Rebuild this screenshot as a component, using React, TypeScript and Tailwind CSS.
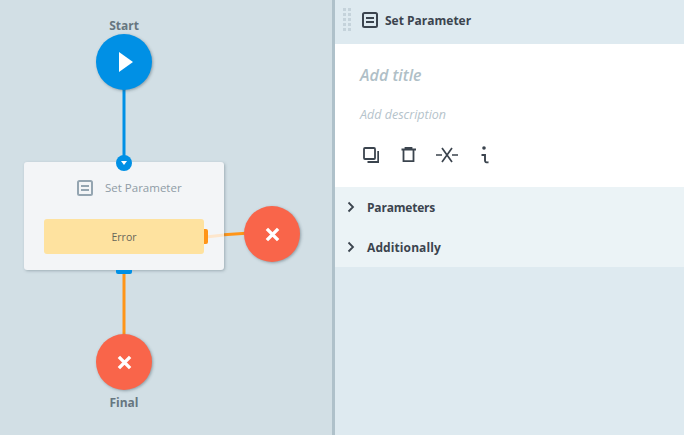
const font = { fontFamily: '"Open Sans", "Noto Sans", sans-serif' };

function SetIcon({ className }: { className: string }) {
  return (
    <svg viewBox="0 0 16 16" className={className} fill="none" stroke="currentColor" strokeWidth="2">
      <rect x="1" y="1" width="14" height="14" rx="1.5" />
      <path d="M4 6h8M4 10h8" />
    </svg>
  );
}

function Cross({ className }: { className: string }) {
  return (
    <svg viewBox="0 0 16 16" className={className} fill="none" stroke="#fff" strokeWidth="3.6">
      <path d="M2 2l12 12M14 2L2 14" />
    </svg>
  );
}

function Chevron() {
  return (
    <svg viewBox="0 0 8 12" className="w-2 h-3 text-[#3b444e]" fill="none" stroke="currentColor" strokeWidth="1.8">
      <path d="M1.500 1.500L6 6l-4.500 4.500" />
    </svg>
  );
}

function Canvas() {
  return (
    <div className="relative w-[332px] shrink-0 bg-[#d2dfe5]">
      <svg className="absolute left-0 top-0" width="332" height="435" fill="none">
        <path d="M124 88V156" stroke="#0090e5" strokeWidth="3" />
        <path d="M124 272V336" stroke="#ff9518" strokeWidth="3" />
        <path d="M224 234.800L246 233.300" stroke="#ff9518" strokeWidth="3" />
      </svg>

      <div className="absolute left-[96px] top-[18px] w-14 text-center text-[12px] leading-4 font-bold text-[#66767f]">Start</div>
      <div className="absolute left-[96px] top-[34px] w-14 h-14 rounded-full bg-[#0090e5] shadow-[1px_1px_3px_rgba(60,80,90,0.45)] flex items-center justify-center">
        <svg viewBox="0 0 14 20" className="w-[14px] h-5 ml-1" fill="#fff"><path d="M0 0l14 10L0 20z" /></svg>
      </div>

      <div className="absolute left-6 top-[162px] w-[200px] h-[108px] rounded-[3px] bg-[#f3f5f7] shadow-[1px_1px_3px_rgba(60,80,90,0.35)]">
        <div className="flex items-center h-[52px] pl-[53px] gap-3">
          <SetIcon className="w-4 h-4 text-[#94a5b1]" />
          <span className="text-[11.500px] text-[#8f9ca6]">Set Parameter</span>
        </div>
        <div className="mx-5 mt-[5px] h-[35px] pt-[2px] rounded-[3px] bg-[#fee29f] flex items-center justify-center text-[10.500px] text-[#66655a]">Error</div>
      </div>

      <svg className="absolute left-[204px] top-[228px]" width="22" height="12" fill="none">
        <path d="M4 8.700L20 7" stroke="#fde6cc" strokeWidth="3" />
      </svg>

      <div className="absolute left-[116px] top-[155px] w-4 h-4 rounded-full bg-[#0090e5] flex items-center justify-center">
        <div className="w-0 h-0 border-x-[3.500px] border-x-transparent border-t-[4px] border-t-white" />
      </div>
      <div className="absolute left-[204px] top-[229px] w-1 h-[15px] rounded-r-[2px] bg-[#ff9518]" />
      <div className="absolute left-[116px] top-[270px] w-4 h-[4px] rounded-b-[2px] bg-[#0090e5]" />

      <div className="absolute left-[244px] top-[206px] w-14 h-14 rounded-full bg-[#f9654a] shadow-[1px_1px_3px_rgba(60,80,90,0.45)] flex items-center justify-center">
        <Cross className="w-[15px] h-[15px]" />
      </div>
      <div className="absolute left-[96px] top-[334px] w-14 h-14 rounded-full bg-[#f9654a] shadow-[1px_1px_3px_rgba(60,80,90,0.45)] flex items-center justify-center">
        <Cross className="w-[15px] h-[15px]" />
      </div>
      <div className="absolute left-[96px] top-[395px] w-14 text-center text-[12px] leading-4 font-bold text-[#66767f]">Final</div>
    </div>
  );
}

function Panel() {
  return (
    <div className="flex-1 flex flex-col bg-[#deeaf0]">
      <div className="h-11 flex items-start pl-2">
        <div className="grid grid-cols-[3px_3px] gap-x-[2px] gap-y-[2px] w-[8px] mt-2 mr-[11px]">
          {Array.from({ length: 10 }).map((_, i) => (
            <div key={i} className="w-[3px] h-[3px] bg-[#c5d3db]" />
          ))}
        </div>
        <SetIcon className="w-4 h-4 mt-3 text-[#3b444e]" />
        <span className="ml-[7px] mt-[12px] text-[12px] leading-[18px] font-bold text-[#3b444e]">Set Parameter</span>
      </div>
      <div className="h-[143px] bg-white pl-[25px] pt-[21px]">
        <div className="text-[16px] leading-5 italic font-semibold text-[#b0bfc7]">Add title</div>
        <div className="mt-[22px] text-[12.500px] leading-4 italic text-[#b5c3cb]">Add description</div>
        <div className="mt-[23px] ml-[3px] flex items-start text-[#3b444e]">
          <svg viewBox="0 0 16 16" className="w-4 h-4 mt-px" fill="none" stroke="currentColor" strokeWidth="1.8">
            <rect x="1" y="1" width="11" height="11" rx="1" />
            <path d="M15.200 4v11H4.500" />
          </svg>
          <svg viewBox="0 0 15 16" className="w-[15px] h-4 ml-[22px] mt-px" fill="none" stroke="currentColor" strokeWidth="1.8">
            <path d="M0.500 2.500h14.500M4.500 2.500V0.800h6V2.500M2.500 2.500V14.200h10V2.500" />
          </svg>
          <svg viewBox="0 0 22 16" className="w-[22px] h-4 ml-5 mt-px" fill="none" stroke="currentColor" strokeWidth="1.7">
            <path d="M0 8h6M16 8h6M6 1l10 14M16 1L6 15" />
          </svg>
          <svg viewBox="0 0 8 18" className="w-2 h-[18px] ml-[23px]" fill="none" stroke="currentColor" strokeWidth="1.9">
            <circle cx="3" cy="2" r="1.800" fill="currentColor" stroke="none" />
            <path d="M0.500 9h3.500V14.500c0 1.500 1 2 3.500 1.800" />
          </svg>
        </div>
      </div>
      <div className="h-20 bg-[#ebf3f6] flex flex-col">
        <div className="h-10 flex items-center pl-3 gap-3">
          <Chevron />
          <span className="pt-[2px] text-[12px] font-bold tracking-[-0.2px] text-[#3b444e]">Parameters</span>
        </div>
        <div className="h-10 flex items-center pl-3 gap-3">
          <Chevron />
          <span className="pt-[2px] text-[12px] font-bold tracking-[0.1px] text-[#3b444e]">Additionally</span>
        </div>
      </div>
    </div>
  );
}

export default function App() {
  return (
    <div className="w-[684px] h-[435px] flex overflow-hidden" style={font}>
      <Canvas />
      <div className="w-[3px] shrink-0 bg-[#afc1ca]" />
      <Panel />
    </div>
  );
}
